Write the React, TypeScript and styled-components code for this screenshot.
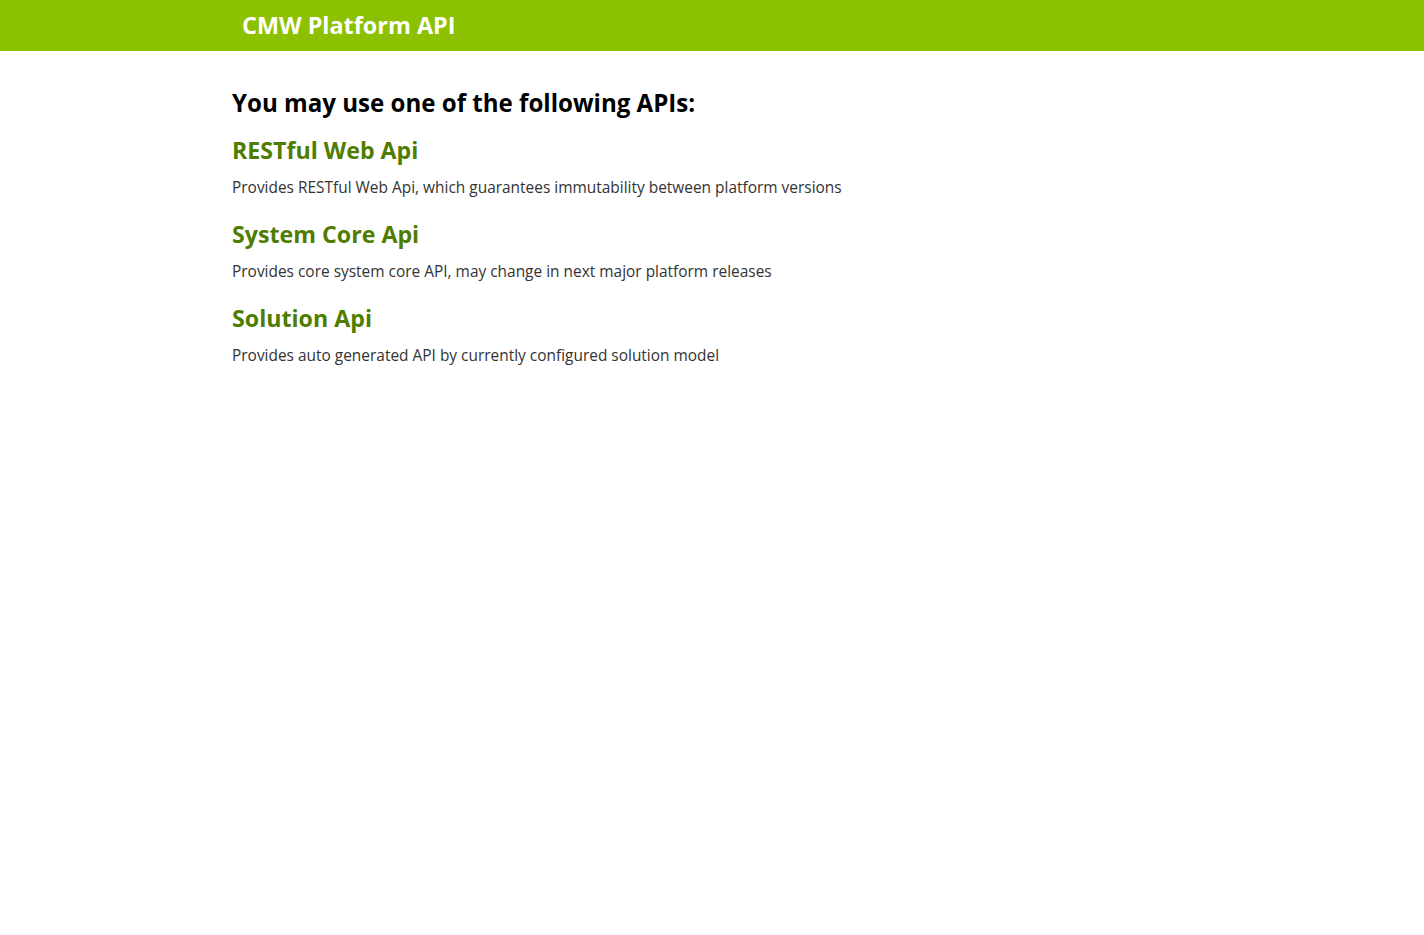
import React from "react";
import styled, { createGlobalStyle } from "styled-components";

const Global = createGlobalStyle`
  html, body { margin: 0; padding: 0; background: #fff; }
  body { font-family: "Open Sans", "Noto Sans", sans-serif; }
`;

const Header = styled.header`
  background: #8bc100;
  height: 51px;
`;

const Container = styled.div`
  width: 960px;
  margin: 0 auto;
`;

const Brand = styled.div`
  padding-left: 10px;
  line-height: 50px;
  font-size: 23.4px;
  font-weight: 700;
  color: #fff;
`;

const Main = styled.main`
  padding-top: 36px;
`;

const Title = styled.h1`
  margin: 0 0 15px;
  font-size: 24.1px;
  font-weight: 700;
  color: #000;
  line-height: 32px;
`;

const ApiLink = styled.a`
  display: block;
  font-size: 23.2px;
  font-weight: 700;
  color: #4f7d00;
  text-decoration: none;
  line-height: 32px;
`;

const Desc = styled.p`
  margin: 10px 0 20px;
  font-size: 15.45px;
  color: #333;
  line-height: 22px;
`;

const apis = [
  { name: "RESTful Web Api", desc: "Provides RESTful Web Api, which guarantees immutability between platform versions" },
  { name: "System Core Api", desc: "Provides core system core API, may change in next major platform releases" },
  { name: "Solution Api", desc: "Provides auto generated API by currently configured solution model" },
];

export default function App() {
  return (
    <>
      <Global />
      <Header>
        <Container>
          <Brand>CMW Platform API</Brand>
        </Container>
      </Header>
      <Container>
        <Main>
          <Title>You may use one of the following APIs:</Title>
          {apis.map((a) => (
            <section key={a.name}>
              <ApiLink href="#">{a.name}</ApiLink>
              <Desc>{a.desc}</Desc>
            </section>
          ))}
        </Main>
      </Container>
    </>
  );
}
